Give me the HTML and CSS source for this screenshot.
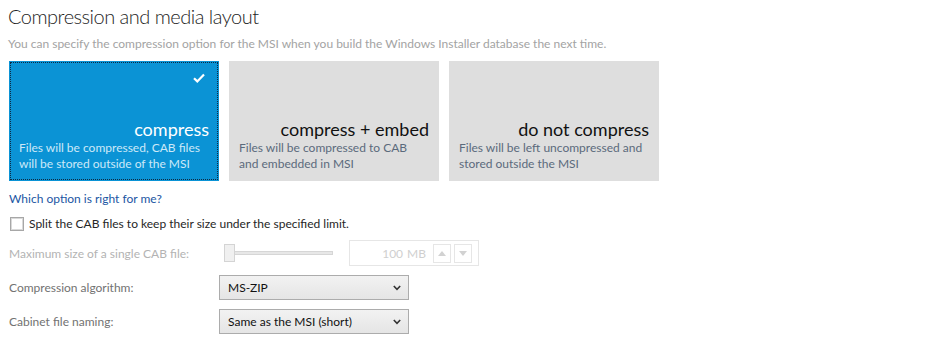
FILE: index.html
```html
<!DOCTYPE html>
<html>
<head>
  <title>Compression and media layout</title>
  <link rel="stylesheet" href="styles.css">
</head>
<body>
<div class="page">
<h1 class="page_title">Compression and media layout</h1>
<p class="page_hint">You can specify the compression option for the MSI when you build the Windows Installer database the next time.</p>

<div class="tiles">
  <div class="tile tile_selected">
    <svg class="tile_check" width="12" height="10" viewBox="0 0 12 10"><path d="M1 5.2 L4.3 8.4 L11 1.4" fill="none" stroke="#fff" stroke-width="2.2"/></svg>
    <div class="tile_name">compress</div>
    <div class="tile_text">Files will be compressed, CAB files will be stored outside of the MSI</div>
  </div>
  <div class="tile">
    <div class="tile_name">compress + embed</div>
    <div class="tile_text">Files will be compressed to CAB and embedded in MSI</div>
  </div>
  <div class="tile">
    <div class="tile_name">do not compress</div>
    <div class="tile_text">Files will be left uncompressed and stored outside the MSI</div>
  </div>
</div>

<a class="help_link" href="#">Which option is right for me?</a>

<label class="check_row"><span class="check_box"></span>Split the CAB files to keep their size under the specified limit.</label>

<div class="form_row form_row_first">
  <div class="form_label disabled">Maximum size of a single CAB file:</div>
  <div class="slider"><span class="slider_thumb"></span><span class="slider_track"></span></div>
  <div class="spin">
    <span class="spin_value">100</span><span class="spin_unit">MB</span>
    <span class="spin_btn"><svg width="8" height="5" viewBox="0 0 8 5"><path d="M0 5 L4 0 L8 5 Z" fill="#d2d2d2"/></svg></span>
    <span class="spin_btn"><svg width="8" height="5" viewBox="0 0 8 5"><path d="M0 0 L4 5 L8 0 Z" fill="#d2d2d2"/></svg></span>
  </div>
</div>

<div class="form_row">
  <div class="form_label">Compression algorithm:</div>
  <div class="combo"><span>MS-ZIP</span><svg width="8" height="6" viewBox="0 0 8 6"><path d="M0.8 1 L4 4.3 L7.2 1" fill="none" stroke="#333" stroke-width="1.6"/></svg></div>
</div>

<div class="form_row">
  <div class="form_label">Cabinet file naming:</div>
  <div class="combo"><span>Same as the MSI (short)</span><svg width="8" height="6" viewBox="0 0 8 6"><path d="M0.8 1 L4 4.3 L7.2 1" fill="none" stroke="#333" stroke-width="1.6"/></svg></div>
</div>
</div>
</body>
</html>
```

FILE: styles.css
```css
body { margin:0px; padding:0px; background:#fff; font-family:Lato, "Open Sans", sans-serif; font-size:12px; color:#333; }
.page { padding:2px 0px 0px 9px; }

.page_title { margin:0px 0px 0px -1px; font-size:20px; font-weight:300; letter-spacing:-0.5px; line-height:28px; color:#1e1e1e; }
.page_hint { margin:6px 0px 0px -1px; line-height:16px; color:#a3a3a3; }

/* плитки выбора */
.tiles { display:flex; gap:10px; margin-top:9px; }
.tile { position:relative; width:210px; height:120px; box-sizing:border-box; background:#dedede;
  padding:0px 10px 9px 10px; display:flex; flex-direction:column; justify-content:flex-end; }
.tile_selected { background:#0b93d5; outline:1px dotted #0c2a44; outline-offset:-2px; }
.tile_check { position:absolute; right:14px; top:12px; }
.tile_name { text-align:right; font-size:18px; line-height:22px; color:#111; }
.tile_text { line-height:16px; color:#5b6a7c; }
.tile_selected .tile_name { color:#fff; }
.tile_selected .tile_text { color:#cde9f8; }

.help_link { display:block; margin-top:10px; line-height:16px; color:#1b56a3; text-decoration:none; }

.check_row { display:flex; align-items:center; gap:5px; margin-top:9px; line-height:16px; color:#262626; }
.check_box { width:12px; height:12px; border:1px solid #a7a7a7; box-shadow:inset 0 0 0 1px #d9d9d9; background:#fff; margin-left:1px; }

/* строки формы */
.form_row { display:flex; align-items:center; margin-top:9px; }
.form_row_first { margin-top:8px; }
.form_label { width:210px; color:#727272; }
.form_label.disabled { color:#b3b3b3; }

.slider { display:flex; align-items:center; width:125px; margin-left:5px; }
.slider_thumb { width:9px; height:16px; background:#f0f0f0; border:1px solid #d4d4d4; }
.slider_track { width:97px; height:2px; background:#e7e7e7; border:1px solid #d6d6d6; border-left:none; }

.spin { display:flex; align-items:center; width:130px; height:26px; border:1px solid #e6e6e6;
  box-sizing:border-box; color:#cfcfcf; padding-right:6px; }
.spin_value { flex:1; text-align:right; }
.spin_unit { margin:0px 4px 0px 4px; }
.spin_btn { display:flex; align-items:center; justify-content:center; width:18px; height:19px;
  border:1px solid #e6e6e6; margin-left:3px; box-sizing:border-box; }

.combo { display:flex; align-items:center; justify-content:space-between; width:190px; height:25px;
  box-sizing:border-box; border:1px solid #acacac; background:linear-gradient(#f2f2f2, #e5e5e5);
  padding:0px 7px 0px 8px; color:#111; }
```
